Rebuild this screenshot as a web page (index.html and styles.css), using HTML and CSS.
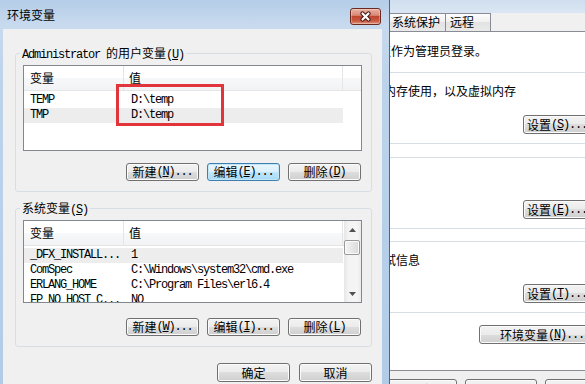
FILE: index.html
```html
<!DOCTYPE html>
<html lang="zh-CN">
<head>
<meta charset="utf-8">
<title>环境变量</title>
<link rel="stylesheet" href="styles.css">
</head>
<body>
<div class="screen">
  <div class="envdlg">
    <div class="titlebar">
      <span class="title">环境变量</span>
      <span class="close"><svg width="13" height="11" viewBox="0 0 13 11"><path d="M3.5 2.5 L9.5 8.5 M9.5 2.5 L3.5 8.5" stroke="#4a1710" stroke-width="4.2" stroke-linecap="round"/><path d="M3.5 2.5 L9.5 8.5 M9.5 2.5 L3.5 8.5" stroke="#fff" stroke-width="2.2" stroke-linecap="round"/></svg></span>
    </div>
    <div class="body">
      <fieldset class="grp">
        <legend><span class="m">Administrator </span>的用户变量<span class="m">(<u>U</u>)</span></legend>
        <div class="list userlist">
          <div class="hdr"><div class="c1">变量</div><div class="c2">值</div><div class="c3"></div></div>
          <div class="row"><div class="c1 m">TEMP</div><div class="c2 m">D:\temp</div></div>
          <div class="row sel"><div class="c1 m">TMP</div><div class="c2 m">D:\temp</div></div>
          <div class="mark"></div>
        </div>
        <div class="btns">
          <button class="btn">新建<span class="m">(<u>N</u>)...</span></button>
          <button class="btn focus">编辑<span class="m">(<u>E</u>)...</span></button>
          <button class="btn">删除<span class="m">(<u>D</u>)</span></button>
        </div>
      </fieldset>
      <fieldset class="grp sysgrp">
        <legend>系统变量<span class="m">(<u>S</u>)</span></legend>
        <div class="list syslist">
          <div class="cols">
            <div class="hdr"><div class="c1">变量</div><div class="c2">值</div></div>
            <div class="row sel"><div class="c1 m">_DFX_INSTALL...</div><div class="c2 m">1</div></div>
            <div class="row"><div class="c1 m">ComSpec</div><div class="c2 m">C:\Windows\system32\cmd.exe</div></div>
            <div class="row"><div class="c1 m">ERLANG_HOME</div><div class="c2 m">C:\Program Files\erl6.4</div></div>
            <div class="row"><div class="c1 m">FP_NO_HOST_C...</div><div class="c2 m">NO</div></div>
          </div>
          <div class="vscroll">
            <div class="arrow"><svg width="7" height="4" viewBox="0 0 7 4"><path d="M0 4 L3.5 0 L7 4 Z" fill="#505050"/></svg></div>
            <div class="thumb"></div>
            <div class="track"></div>
            <div class="arrow"><svg width="7" height="4" viewBox="0 0 7 4"><path d="M0 0 L3.5 4 L7 0 Z" fill="#505050"/></svg></div>
          </div>
        </div>
        <div class="btns sysbtns">
          <button class="btn">新建<span class="m">(<u>W</u>)...</span></button>
          <button class="btn">编辑<span class="m">(<u>I</u>)...</span></button>
          <button class="btn">删除<span class="m">(<u>L</u>)</span></button>
        </div>
      </fieldset>
      <div class="okrow">
        <button class="btn big">确定</button>
        <button class="btn big">取消</button>
      </div>
    </div>
  </div>
  <div class="sysbg">
    <div class="sysdlg">
      <div class="sys-glass"></div>
      <div class="tabs">
        <div class="tab tab1">系统保护</div>
        <div class="tab tab2">远程</div>
      </div>
      <div class="panel">
        <div class="note">要进行大多数更改，您必须作为管理员登录。</div>
        <div class="sgrp">
          <div class="gtext">视觉效果，处理器计划，内存使用，以及虚拟内存</div>
          <button class="btn sbtn">设置<span class="m">(<u>S</u>)...</span></button>
        </div>
        <div class="sgrp g2">
          <div class="gtext">与您登录有关的桌面设置</div>
          <button class="btn sbtn">设置<span class="m">(<u>E</u>)...</span></button>
        </div>
        <div class="sgrp g3">
          <div class="gtext">系统启动、系统失败和调试信息</div>
          <button class="btn sbtn">设置<span class="m">(<u>T</u>)...</span></button>
        </div>
        <button class="btn envbtn">环境变量<span class="m">(<u>N</u>)...</span></button>
      </div>
      <div class="dlgbtns">
        <button class="btn dbtn">确定</button>
        <button class="btn dbtn">取消</button>
        <button class="btn dbtn">应用<span class="m">(<u>A</u>)</span></button>
      </div>
    </div>
  </div>
</div>
</body>
</html>
```

FILE: styles.css
```css
* { box-sizing: border-box; }
html, body { margin: 0; padding: 0; }
body {
  width: 585px;
  height: 384px;
  overflow: hidden;
  font-family: "Noto Sans CJK SC", "Liberation Sans", sans-serif;
  font-size: 12px;
  color: #000;
  background: #f0f0f0;
}
.m {
  font-family: "Liberation Mono", "Noto Sans CJK SC", monospace;
  font-size: 12px;
  letter-spacing: -1.2px;
}
u { text-decoration: underline; text-underline-offset: 1px; }

.screen { display: flex; width: 585px; height: 384px; overflow: hidden; }

/* left dialog */
.envdlg {
  flex: none;
  width: 390px;
  height: 384px;
  display: flex;
  flex-direction: column;
  background: linear-gradient(#b5cde8, #c8daee 26px, #bcd3eb 80px, #b2cce8);
  border-right: 1px solid #4d6684;
}
.titlebar {
  height: 29px;
  flex: none;
  display: flex;
  justify-content: space-between;
  align-items: flex-start;
  padding: 0 8px 0 7px;
}
.title { margin-top: 7px; line-height: 16px; }
.close {
  margin-top: 8px;
  width: 31px;
  height: 17px;
  border: 1px solid #6a2a20;
  border-radius: 3px;
  background: linear-gradient(#eab0a2, #d98a77 42%, #c04631 50%, #c95a42 80%, #e39a84);
  box-shadow: inset 0 0 0 1px rgba(255, 255, 255, 0.3);
  display: flex;
  align-items: center;
  justify-content: center;
}
.body {
  flex: 1;
  margin: 0 7px 0 3px;
  background: #f0f0f0;
  padding: 16px 10px 0 12px;
}

.grp {
  margin: 0;
  min-width: 0;
  padding: 4px 9px 10px 7px;
  border: 1px solid #d5dfe5;
  border-radius: 3px;
}
.sysgrp { margin-top: 8px; }
.grp legend {
  padding: 0 2px;
  margin-left: -3px;
  height: 16px;
  line-height: 16px;
  white-space: nowrap;
}

.list {
  position: relative;
  background: #fff;
  border: 1px solid #828790;
  overflow: hidden;
}
.userlist { height: 86px; }
.syslist { height: 83px; display: flex; }
.cols { flex: 1; min-width: 0; }

.hdr {
  display: flex;
  height: 25px;
  margin-bottom: 2px;
  border-bottom: 1px solid #e5e5e5;
  background: linear-gradient(#fff, #fff 50%, #f7f8fa 50%, #f2f3f5);
}
.hdr > div {
  line-height: 23px;
  border-right: 1px solid #e5e5e5;
}
.hdr .c1 { padding-left: 6px; }
.hdr .c2 { padding-left: 5px; }
.hdr .c3 { flex: 1; border-right: none; }
.c1 { width: 100px; flex: none; }
.c2 { width: 219px; flex: none; }

.row { display: flex; height: 15px; line-height: 15px; width: 319px; }
.row > div { white-space: nowrap; overflow: hidden; }
.row .c1 { padding-left: 6px; }
.row .c2 { padding-left: 7px; }
.row.sel { background: #ededed; }

.mark {
  position: absolute;
  left: 92px;
  top: 18px;
  width: 108px;
  height: 42px;
  border: 3px solid #e2353b;
}

.vscroll {
  width: 17px;
  flex: none;
  display: flex;
  flex-direction: column;
  background: linear-gradient(90deg, #e6e6e6, #f3f3f3 25%, #f5f5f5 75%, #ebebeb);
}
.arrow { height: 17px; flex: none; display: flex; align-items: center; justify-content: center; }
.thumb {
  flex: none;
  margin: 2px 1px 0 0;
  height: 15px;
  border: 1px solid #9a9a9a;
  border-radius: 2px;
  background: linear-gradient(90deg, #f4f4f4, #e7e7e7 50%, #d9d9d9);
  box-shadow: inset 0 0 0 1px #fbfbfb;
}
.track { flex: 1; }

.btns {
  display: flex;
  justify-content: flex-end;
  gap: 8px;
  margin-top: 12px;
  padding-right: 1px;
}
.sysbtns { margin-top: 15px; }

.btn {
  font: inherit;
  color: #000;
  margin: 0;
  padding: 0;
  width: 73px;
  height: 18px;
  line-height: 16px;
  border: 1px solid #707070;
  border-radius: 3px;
  background: linear-gradient(#f3f3f3, #ebebeb 50%, #dddddd 50%, #cfcfcf);
  box-shadow: inset 0 0 0 1px #fbfbfb;
  display: flex;
  align-items: center;
  justify-content: center;
  white-space: nowrap;
}
.btn.focus {
  border-color: #3c7fb1;
  background: linear-gradient(#eaf6fd, #d9f0fc 50%, #bee6fd 50%, #a7d9f5);
  box-shadow: inset 0 0 0 1px #c4e5f6;
}
.btn.big { height: 19px; }

.okrow {
  display: flex;
  justify-content: flex-end;
  gap: 9px;
  margin-top: 16px;
}

/* right background dialog */
.sysbg {
  flex: 1;
  min-width: 0;
  height: 384px;
  overflow: hidden;
  background: #f0f0f0;
}
.sysdlg { width: 440px; margin-left: -210px; }
.sys-glass { height: 13px; background: linear-gradient(#cfdeef, #dae6f3); }
.tabs { height: 18px; display: flex; padding-left: 209px; }
.tab {
  height: 18px;
  border: 1px solid #898c95;
  border-bottom: none;
  background: linear-gradient(#fdfdfd, #efefef 50%, #e3e3e3 50%, #e9e9e9);
  line-height: 16px;
  white-space: nowrap;
}
.tab + .tab { border-left: none; }
.tab1 { width: 57px; padding-left: 2px; }
.tab2 { width: 45px; padding-left: 4px; }

.panel {
  height: 340px;
  background: #fff;
  border: 1px solid #898c95;
  padding-top: 11px;
}
.note { margin-left: 66px; line-height: 16px; white-space: nowrap; }
.sgrp {
  height: 72px;
  margin-top: 13px;
  border-top: 1px solid #d5dfe5;
  border-bottom: 1px solid #d5dfe5;
  padding-top: 10px;
}
.sgrp.g3 { margin-top: 12px; }
.gtext { padding-left: 71px; line-height: 16px; white-space: nowrap; }
.sbtn { width: 68px; height: 19px; margin: 16px 0 0 342px; }
.envbtn { width: 126px; height: 19px; margin: 12px 0 0 298px; }

.dlgbtns {
  display: flex;
  gap: 8px;
  margin: 8px 0 0 205px;
}
.dbtn { width: 72px; height: 22px; flex: none; }
```
